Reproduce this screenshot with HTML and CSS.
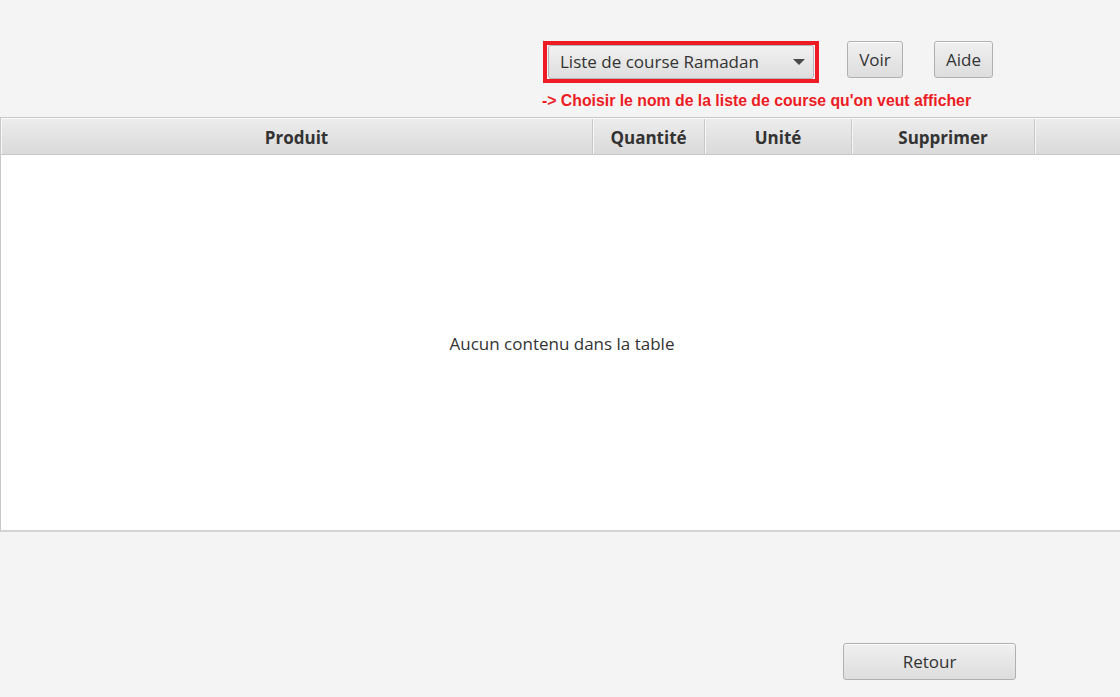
FILE: index.html
```html
<!DOCTYPE html>
<html lang="fr">
<head>
<meta charset="utf-8">
<title>Liste de course</title>
<link rel="stylesheet" href="styles.css">
</head>
<body>
<div class="app">
  <div class="top">
    <div class="controls">
      <div class="highlight">
        <div class="combo">
          <span class="combo-text">Liste de course Ramadan</span>
          <span class="combo-arrow"></span>
        </div>
      </div>
      <button class="btn btn-voir">Voir</button>
      <button class="btn btn-aide">Aide</button>
    </div>
    <div class="hint">-&gt; Choisir le nom de la liste de course qu'on veut afficher</div>
  </div>
  <div class="table">
    <div class="thead">
      <div class="th col-produit">Produit</div>
      <div class="th col-quantite">Quantité</div>
      <div class="th col-unite">Unité</div>
      <div class="th col-suppr">Supprimer</div>
      <div class="th col-filler"></div>
    </div>
    <div class="tbody">
      <span class="empty">Aucun contenu dans la table</span>
    </div>
  </div>
  <div class="bottom">
    <button class="btn btn-retour">Retour</button>
  </div>
</div>
</body>
</html>
```

FILE: styles.css
```css
html, body {
  margin: 0;
  padding: 0;
  background: #f4f4f4;
}
body {
  font-family: "Open Sans", "Noto Sans", sans-serif;
  color: #333;
}
.app {
  width: 1120px;
  height: 697px;
  display: flex;
  flex-direction: column;
}
.top {
  height: 117px;
  padding-left: 542px;
  box-sizing: border-box;
  padding-top: 41px;
}
.controls {
  display: flex;
  align-items: flex-start;
  margin-left: 1px;
}
.highlight {
  width: 276px;
  height: 42px;
  box-sizing: border-box;
  border: 4px solid #ed1c24;
  padding: 0 1px;
  display: flex;
  align-items: center;
}
.combo {
  flex: 1;
  height: 34px;
  box-sizing: border-box;
  border: 1px solid #b5b5b5;
  border-radius: 3px;
  background: linear-gradient(#f1f1f1, #dedede);
  display: flex;
  align-items: center;
  padding: 0 8px 0 11px;
  font-size: 17px;
  color: #333;
}
.combo-text {
  flex: 1;
  margin-top: -2px;
}
.combo-arrow {
  width: 0;
  height: 0;
  border-left: 6px solid transparent;
  border-right: 6px solid transparent;
  border-top: 6px solid #4a4a4a;
}
.btn {
  font-family: "Open Sans", "Noto Sans", sans-serif;
  font-size: 17px;
  color: #333;
  height: 37px;
  box-sizing: border-box;
  border: 1px solid #b0b0b0;
  border-radius: 3px;
  background: linear-gradient(#f0f0f0, #dddddd);
  box-shadow: inset 0 1px 0 #fbfbfb;
  padding: 0 0 1px;
  cursor: pointer;
}
.btn-voir {
  width: 56px;
  margin-left: 28px;
}
.btn-aide {
  width: 59px;
  margin-left: 31px;
}
.hint {
  margin-top: 10px;
  font-family: "Liberation Sans", Arial, sans-serif;
  font-weight: bold;
  font-size: 15.8px;
  color: #ed1c24;
  line-height: 16px;
}
.table {
  height: 415px;
  box-sizing: border-box;
  border-top: 1px solid #c8c8c8;
  border-bottom: 2px solid #d4d4d4;
  border-left: 1px solid #c8c8c8;
  display: flex;
  flex-direction: column;
}
.thead {
  display: flex;
  height: 37px;
  box-sizing: border-box;
  border-top: 1px solid #fafafa;
  border-bottom: 1px solid #c8c8c8;
  background: linear-gradient(#ececec, #dadada);
}
.th {
  box-sizing: border-box;
  border-right: 1px solid #c8c8c8;
  box-shadow: inset 1px 0 0 #f6f6f6;
  display: flex;
  align-items: center;
  justify-content: center;
  font-weight: bold;
  font-size: 17px;
  color: #333;
  padding-top: 2px;
}
.col-produit { width: 592px; }
.col-quantite { width: 112px; }
.col-unite { width: 147px; }
.col-suppr { width: 183px; }
.col-filler { flex: 1; border-right: none; }
.tbody {
  flex: 1;
  background: #fff;
  display: flex;
  align-items: center;
  justify-content: center;
  font-size: 17px;
  color: #333;
}
.empty {
  margin-left: 3px;
  margin-top: 2px;
}
.bottom {
  flex: 1;
  display: flex;
  justify-content: flex-end;
  align-items: flex-start;
  padding-top: 111px;
  padding-right: 104px;
}
.btn-retour {
  width: 173px;
}
```
